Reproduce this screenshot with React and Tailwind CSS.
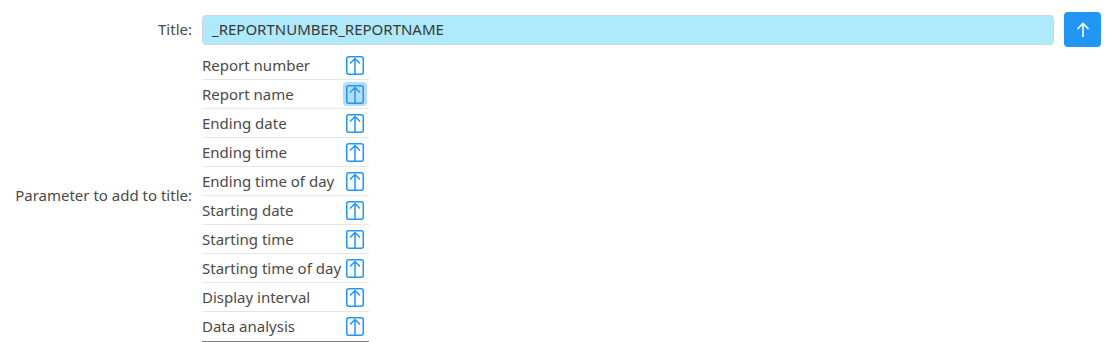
import React from 'react';

const params = [
    'Report number',
    'Report name',
    'Ending date',
    'Ending time',
    'Ending time of day',
    'Starting date',
    'Starting time',
    'Starting time of day',
    'Display interval',
    'Data analysis',
];

const BoxArrow = () => (
    <svg width="18" height="19" viewBox="0 0 18 19" fill="none">
        <rect x="0.75" y="0.75" width="16.5" height="17.5" rx="2" stroke="#2196f3" strokeWidth="1.5" />
        <path d="M9 2.5V18M4 7.5L9 2.5L14 7.5" stroke="#2196f3" strokeWidth="1.5" />
    </svg>
);

const App = () => {
    return (
        <div className="w-[1107px] h-[342px] bg-white text-[15px] text-[#4a4a4a] font-['Noto_Sans',sans-serif]">
            <div className="grid grid-cols-[192px_1fr] gap-x-[10px] pt-[12px]">
                <div className="flex items-center justify-end h-[35px]">Title:</div>
                <div className="flex items-center gap-[10px] pr-[6px]">
                    <div className="flex-1 h-[30px] flex items-center px-[9px] bg-[#aeeafc] border border-[#cfd6da] rounded-[4px] text-[#383838]">
                        _REPORTNUMBER_REPORTNAME
                    </div>
                    <button className="w-[37px] h-[35px] flex items-center justify-center bg-[#2196f3] rounded-[4px]">
                        <svg width="14" height="16" viewBox="0 0 14 16" fill="none">
                            <path d="M7 1.5V15M1.5 7L7 1.5L12.5 7" stroke="white" strokeWidth="1.6" />
                        </svg>
                    </button>
                </div>

                <div className="flex items-center justify-end pl-[1px]">Parameter to add to title:</div>
                <div className="w-[167px] pt-[4px]">
                    <div className="border-b-2 border-[#7d7d7d]">
                        {params.map((p, i) => (
                            <div
                                key={p}
                                className={`flex items-center h-[29px] ${i < params.length - 1 ? 'border-b border-[#e6e6e6]' : ''}`}
                            >
                                <span className="flex-1 whitespace-nowrap">{p}</span>
                                <span
                                    className={`flex items-center justify-center w-[24px] h-[24px] mr-[2px] rounded-[4px] ${i === 1 ? 'bg-[#b5dcfb]' : ''}`}
                                >
                                    <BoxArrow />
                                </span>
                            </div>
                        ))}
                    </div>
                </div>
            </div>
        </div>
    );
};

export default App;
